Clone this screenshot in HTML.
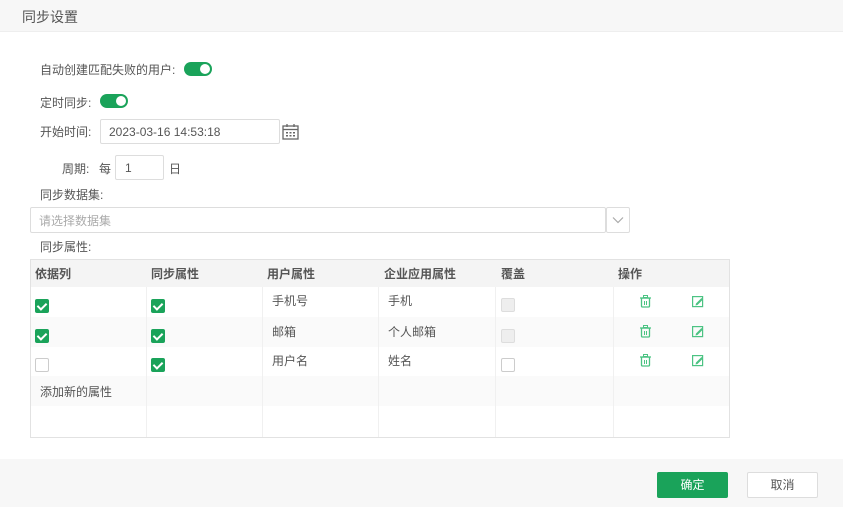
<!DOCTYPE html>
<html><head><meta charset="utf-8"><style>
*{margin:0;padding:0;box-sizing:border-box}
body{width:843px;height:507px;background:#fff;font-family:"Liberation Sans","Noto Sans CJK SC",sans-serif;font-size:12px;color:#555;position:relative;overflow:hidden}
.a{position:absolute}
.hd{left:0;top:0;width:843px;height:32px;background:#f7f7f7;border-bottom:1px solid #eee}
.ft{left:0;top:459px;width:843px;height:48px;background:#f7f7f7}
.tog{width:28px;height:14px;border-radius:7px;background:#1aa35a}
.tog:after{content:"";position:absolute;right:2px;top:2px;width:10px;height:10px;border-radius:50%;background:#fff}
.inp{border:1px solid #ddd;border-radius:2px;background:#fff}
.cb{width:14px;height:14px;border-radius:2px;background:#1aa35a}
.cb:after{content:"";position:absolute;left:4px;top:2px;width:4px;height:7px;border:solid #fff;border-width:0 2px 2px 0;transform:rotate(45deg)}
.eb{width:14px;height:14px;border-radius:2px;border:1px solid #ccc;background:#fff}
.db{width:14px;height:14px;border-radius:2px;border:1px solid #ddd;background:#eee}
.th{font-weight:bold;color:#555}
</style></head><body>
<div class="a hd"></div>
<div class="a" style="left:22px;top:7px;font-size:14px;color:#555">同步设置</div>
<div class="a" style="left:40px;top:61px">自动创建匹配失败的用户:</div>
<div class="a tog" style="left:184px;top:62px"></div>
<div class="a" style="left:40px;top:94px">定时同步:</div>
<div class="a tog" style="left:100px;top:94px"></div>
<div class="a" style="left:40px;top:123px">开始时间:</div>
<div class="a inp" style="left:100px;top:119px;width:180px;height:25px"></div>
<div class="a" style="left:109px;top:125px;color:#555">2023-03-16 14:53:18</div>
<svg class="a" style="left:282px;top:124px" width="17" height="16" viewBox="0 0 17 16"><rect x="1" y="2" width="15" height="13" fill="none" stroke="#666" stroke-width="1.3"/><line x1="1" y1="5.5" x2="16" y2="5.5" stroke="#666" stroke-width="1.3"/><line x1="5" y1="0" x2="5" y2="3" stroke="#666" stroke-width="1.3"/><line x1="12" y1="0" x2="12" y2="3" stroke="#666" stroke-width="1.3"/><g fill="#666"><rect x="4" y="8" width="2" height="1.5"/><rect x="7.5" y="8" width="2" height="1.5"/><rect x="11" y="8" width="2" height="1.5"/><rect x="4" y="11" width="2" height="1.5"/><rect x="7.5" y="11" width="2" height="1.5"/><rect x="11" y="11" width="2" height="1.5"/></g></svg>
<div class="a" style="left:62px;top:160px">周期:</div>
<div class="a" style="left:99px;top:160px">每</div>
<div class="a inp" style="left:115px;top:155px;width:49px;height:25px"></div>
<div class="a" style="left:125px;top:161px">1</div>
<div class="a" style="left:169px;top:160px">日</div>
<div class="a" style="left:40px;top:186px">同步数据集:</div>
<div class="a inp" style="left:30px;top:207px;width:576px;height:26px"></div>
<div class="a" style="left:39px;top:212px;color:#aaa">请选择数据集</div>
<div class="a inp" style="left:606px;top:207px;width:24px;height:26px"></div>
<svg class="a" style="left:612px;top:216px" width="12" height="8"><path d="M1 1.5L6 6.5L11 1.5" fill="none" stroke="#aaa" stroke-width="1.2"/></svg>
<div class="a" style="left:40px;top:238px">同步属性:</div>
<div class="a" style="left:30px;top:259px;width:700px;height:179px;border:1px solid #e2e2e2"></div>
<div class="a" style="left:31px;top:260px;width:698px;height:27px;background:#f4f4f4"></div>
<div class="a" style="left:31px;top:317px;width:698px;height:30px;background:#fafafa"></div>
<div class="a" style="left:31px;top:376px;width:698px;height:30px;background:#fafafa"></div>
<div class="a" style="left:146px;top:287px;width:1px;height:150px;background:#f0f0f0"></div>
<div class="a" style="left:262px;top:287px;width:1px;height:150px;background:#f0f0f0"></div>
<div class="a" style="left:378px;top:287px;width:1px;height:150px;background:#f0f0f0"></div>
<div class="a" style="left:495px;top:287px;width:1px;height:150px;background:#f0f0f0"></div>
<div class="a" style="left:613px;top:287px;width:1px;height:150px;background:#f0f0f0"></div>
<div class="a th" style="left:35px;top:265px">依据列</div>
<div class="a th" style="left:151px;top:265px">同步属性</div>
<div class="a th" style="left:267px;top:265px">用户属性</div>
<div class="a th" style="left:384px;top:265px">企业应用属性</div>
<div class="a th" style="left:501px;top:265px">覆盖</div>
<div class="a th" style="left:618px;top:265px">操作</div>
<div class="a cb" style="left:35px;top:299px"></div>
<div class="a cb" style="left:151px;top:299px"></div>
<div class="a cb" style="left:35px;top:329px"></div>
<div class="a cb" style="left:151px;top:329px"></div>
<div class="a eb" style="left:35px;top:358px"></div>
<div class="a cb" style="left:151px;top:358px"></div>
<div class="a" style="left:272px;top:292px">手机号</div>
<div class="a" style="left:272px;top:323px">邮箱</div>
<div class="a" style="left:272px;top:352px">用户名</div>
<div class="a" style="left:388px;top:292px">手机</div>
<div class="a" style="left:388px;top:323px">个人邮箱</div>
<div class="a" style="left:388px;top:352px">姓名</div>
<div class="a db" style="left:501px;top:298px"></div>
<div class="a db" style="left:501px;top:329px"></div>
<div class="a eb" style="left:501px;top:358px"></div>
<div class="a" style="left:40px;top:383px">添加新的属性</div>
<svg width="0" height="0" style="position:absolute"><defs>
<g id="tr"><rect x="1.5" y="3" width="8" height="9" rx="1" fill="none" stroke="#4cc383" stroke-width="1.3"/><line x1="0" y1="3" x2="11" y2="3" stroke="#4cc383" stroke-width="1.3"/><rect x="3.5" y="0.5" width="4" height="2" fill="none" stroke="#4cc383"/><line x1="4.5" y1="6" x2="4.5" y2="10" stroke="#4cc383"/><line x1="6.5" y1="6" x2="6.5" y2="10" stroke="#4cc383"/></g>
<g id="ed"><rect x="0.6" y="1.6" width="10" height="10" fill="none" stroke="#4cc383" stroke-width="1.2"/><path d="M4 8.5L9.5 3L11 4.5L5.5 10L3.5 10.5Z" fill="#4cc383"/></g></defs></svg>
<svg class="a" style="left:640px;top:295px" width="12" height="13"><use href="#tr"/></svg>
<svg class="a" style="left:692px;top:295px" width="12" height="13"><use href="#ed"/></svg>
<svg class="a" style="left:640px;top:325px" width="12" height="13"><use href="#tr"/></svg>
<svg class="a" style="left:692px;top:325px" width="12" height="13"><use href="#ed"/></svg>
<svg class="a" style="left:640px;top:354px" width="12" height="13"><use href="#tr"/></svg>
<svg class="a" style="left:692px;top:354px" width="12" height="13"><use href="#ed"/></svg>
<div class="a ft"></div>
<div class="a" style="left:657px;top:472px;width:71px;height:26px;background:#1aa35a;border-radius:2px;color:#fff;text-align:center;line-height:26px">确定</div>
<div class="a" style="left:747px;top:472px;width:71px;height:26px;background:#fff;border:1px solid #ddd;border-radius:2px;color:#555;text-align:center;line-height:24px">取消</div>
</body></html>
